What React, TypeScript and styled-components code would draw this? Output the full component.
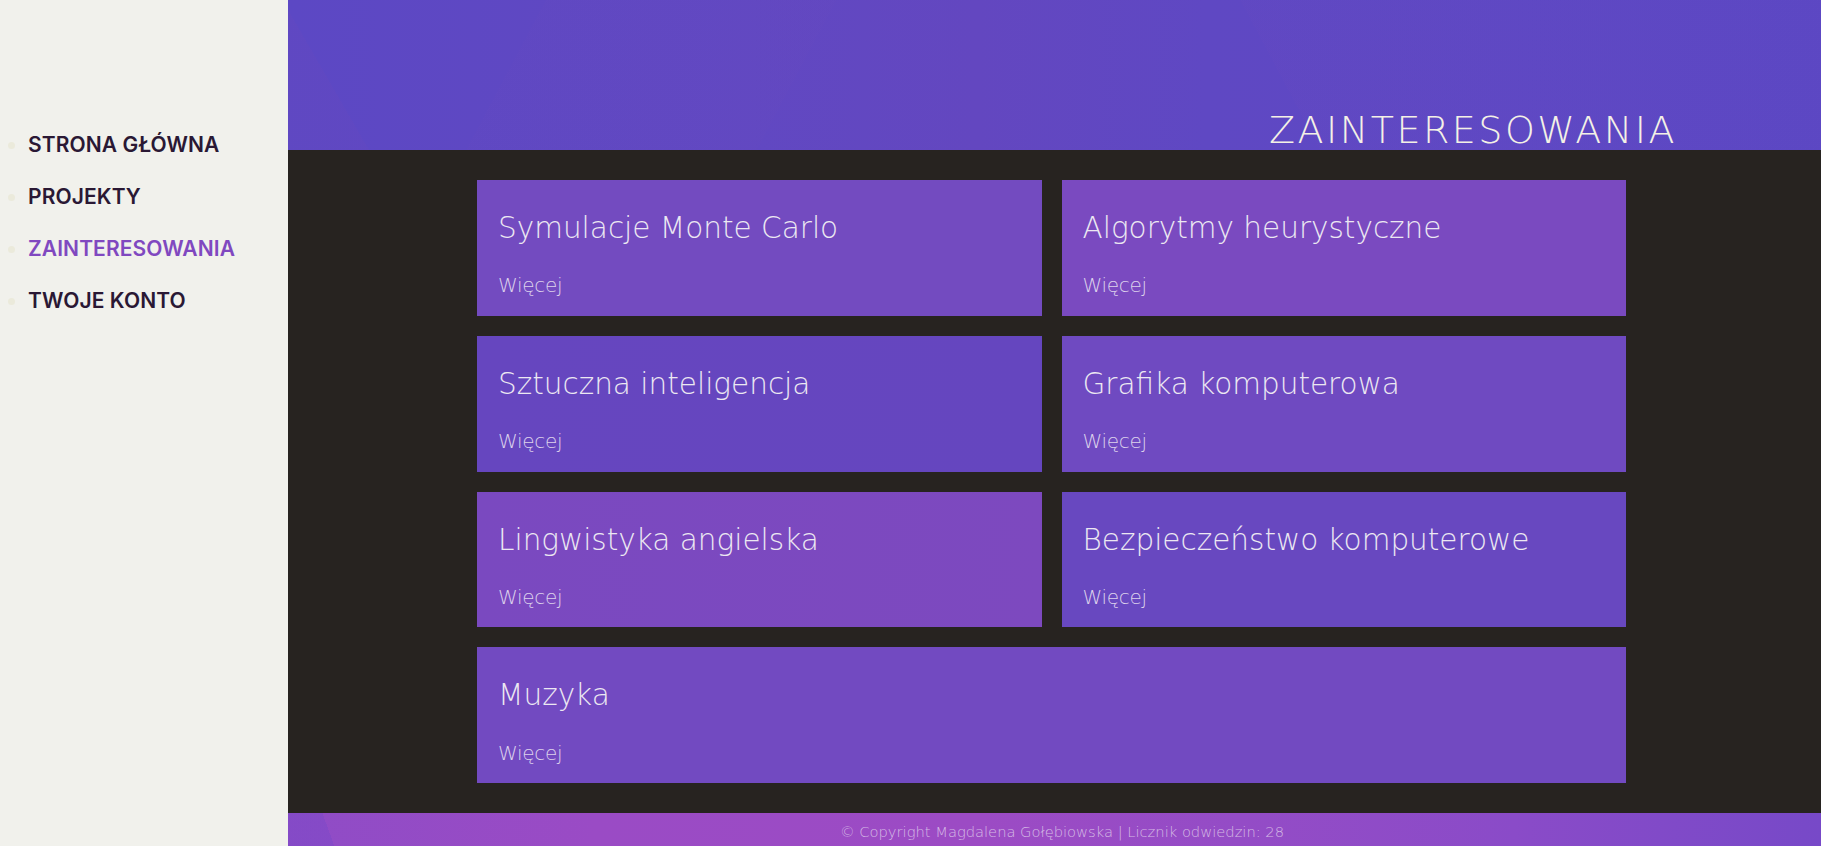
import React from "react";
import styled, { createGlobalStyle } from "styled-components";

const GlobalStyle = createGlobalStyle`
  html, body, #root { margin: 0; padding: 0; height: 100%; }
  body {
    font-family: "DejaVu Sans", "Noto Sans", sans-serif;
    background: #272320;
    overflow: hidden;
  }
  * { box-sizing: border-box; }
`;

const Page = styled.div`
  display: flex;
  width: 100%;
  height: 100vh;
`;

const Sidebar = styled.aside`
  flex: 0 0 288px;
  background: #f1f1ec;
  padding-top: 132px;
`;

const NavList = styled.ul`
  list-style: disc;
  margin: 0;
  padding: 0 0 0 28px;
  display: flex;
  flex-direction: column;
  gap: 27px;
  li::marker {
    color: #ebeadb;
  }
`;

const NavItem = styled.li<{ $active?: boolean }>`
  font-family: "Inter", "Noto Sans", sans-serif;
  font-weight: 600;
  font-size: 21px;
  line-height: 25px;
  color: ${(p) => (p.$active ? "#8048c0" : "#2a1834")};
  letter-spacing: 0.1px;
  cursor: pointer;
`;

const Main = styled.main`
  flex: 1;
  display: flex;
  flex-direction: column;
  min-width: 0;
`;

const Header = styled.header`
  flex: 0 0 150px;
  display: flex;
  justify-content: flex-end;
  align-items: flex-end;
  padding: 0 144px 0 0;
  background:
    linear-gradient(62deg, rgba(80, 70, 200, 0) 0 64%, rgba(108, 74, 190, 0.12) 64% 100%),
    linear-gradient(118deg, rgba(90, 72, 196, 0) 0 16%, rgba(104, 74, 190, 0.14) 16% 34%, rgba(90, 72, 196, 0) 34% 100%),
    linear-gradient(60deg, rgba(110, 72, 186, 0.18) 0 5%, rgba(110, 72, 186, 0) 5% 100%),
    linear-gradient(90deg, #5c48c4 0%, #6148c2 30%, #6347c0 45%, #5f48c3 60%, #5d48c4 80%, #5a47c4 100%);
`;

const Title = styled.h1`
  margin: 0 0 1px 0;
  font-family: "DejaVu Sans", sans-serif;
  font-weight: 200;
  font-size: 38px;
  line-height: 38px;
  letter-spacing: 2.5px;
  color: #f4f1e6;
  text-transform: uppercase;
`;

const Content = styled.section`
  flex: 1;
  background: #272320;
  padding: 30px 195px 30px 189px;
  display: grid;
  grid-template-columns: 1fr 1fr;
  grid-auto-rows: 1fr;
  gap: 20px;
`;

const Card = styled.article<{ $bg: string; $wide?: boolean }>`
  grid-column: ${(p) => (p.$wide ? "1 / -1" : "auto")};
  background: ${(p) => p.$bg};
  padding: 31px 20px 0 21px;
  display: flex;
  flex-direction: column;
`;

const CardTitle = styled.h2`
  margin: 0;
  font-family: "DejaVu Sans", sans-serif;
  font-weight: 200;
  font-size: 29.5px;
  line-height: 1.2;
  color: #ece8f2;
`;

const More = styled.a`
  margin-top: 27px;
  font-family: "DejaVu Sans", sans-serif;
  font-weight: 200;
  font-size: 20px;
  line-height: 24px;
  letter-spacing: -0.3px;
  color: #ddd2ec;
  text-decoration: none;
  cursor: pointer;
`;

const Footer = styled.footer`
  flex: 0 0 33px;
  display: flex;
  justify-content: center;
  align-items: flex-start;
  padding: 8px 0 0 15px;
  background:
    linear-gradient(70deg, rgba(120, 72, 200, 0.45) 0 3%, rgba(120, 72, 200, 0) 3% 100%),
    linear-gradient(90deg, #8f4cc6 0%, #9a4bc5 20%, #9c4bc4 45%, #944cc6 62%, #8a4bc8 80%, #7749c8 100%);
`;

const FooterText = styled.p`
  margin: 0;
  font-family: "DejaVu Sans", sans-serif;
  font-weight: 200;
  font-size: 14.7px;
  line-height: 22px;
  color: #d4b9e4;
`;

const nav = [
  { label: "STRONA GŁÓWNA" },
  { label: "PROJEKTY" },
  { label: "ZAINTERESOWANIA", active: true },
  { label: "TWOJE KONTO" },
];

const cards = [
  { title: "Symulacje Monte Carlo", bg: "#734bc0" },
  { title: "Algorytmy heurystyczne", bg: "#7a4ac0" },
  { title: "Sztuczna inteligencja", bg: "linear-gradient(90deg, #6646bf, #6546bf)" },
  { title: "Grafika komputerowa", bg: "#6f4ac1" },
  { title: "Lingwistyka angielska", bg: "linear-gradient(90deg, #7a49c0, #7d49bf)" },
  { title: "Bezpieczeństwo komputerowe", bg: "#6848c0" },
  { title: "Muzyka", bg: "#724ac1", wide: true },
];

export default function App() {
  return (
    <Page>
      <GlobalStyle />
      <Sidebar>
        <NavList>
          {nav.map((n) => (
            <NavItem key={n.label} $active={n.active}>
              {n.label}
            </NavItem>
          ))}
        </NavList>
      </Sidebar>
      <Main>
        <Header>
          <Title>Zainteresowania</Title>
        </Header>
        <Content>
          {cards.map((c) => (
            <Card key={c.title} $bg={c.bg} $wide={c.wide}>
              <CardTitle>{c.title}</CardTitle>
              <More>Więcej</More>
            </Card>
          ))}
        </Content>
        <Footer>
          <FooterText>© Copyright Magdalena Gołębiowska | Licznik odwiedzin: 28</FooterText>
        </Footer>
      </Main>
    </Page>
  );
}
